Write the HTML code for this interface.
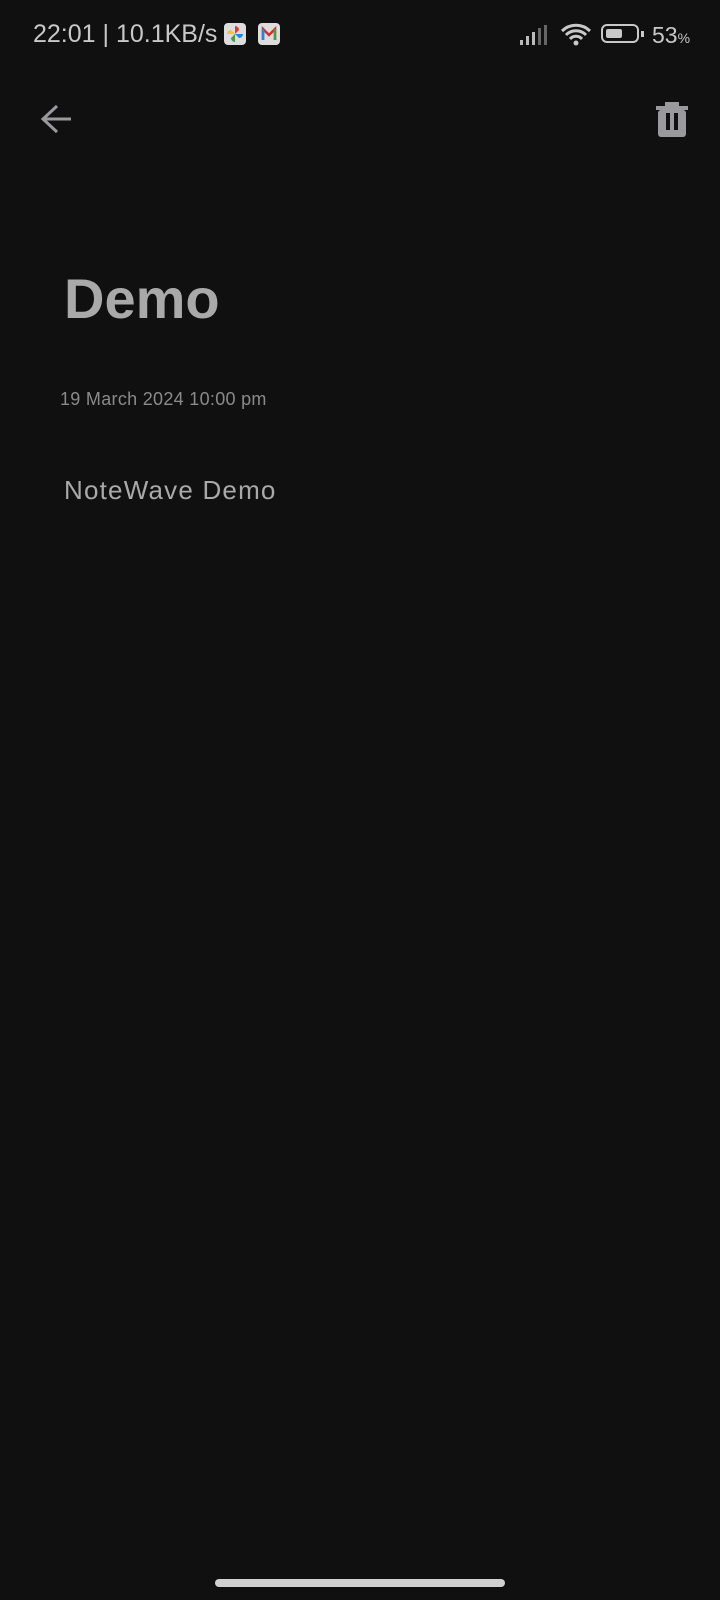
<!DOCTYPE html>
<html><head><style>
html,body{margin:0;padding:0;background:#101010;width:720px;height:1600px;overflow:hidden;font-family:"Liberation Sans",sans-serif}
.a{position:absolute;white-space:nowrap}
</style></head><body>
<div class="a" style="left:33px;top:20px;font-size:25px;color:#c8c8c8;letter-spacing:0px">22:01 | 10.1KB/s</div>
<div class="a" style="left:224px;top:23px;width:22px;height:22px;background:#ddd;border-radius:4px;overflow:hidden">
 <svg width="22" height="22" viewBox="0 0 22 22"><path d="M11 11V3a4 4 0 0 1 4 4z" fill="#e53935"/><path d="M11 11h8a4 4 0 0 1-4 4z" fill="#1e88e5"/><path d="M11 11v8a4 4 0 0 1-4-4z" fill="#43a047"/><path d="M11 11H3a4 4 0 0 1 4-4z" fill="#fbc02d"/></svg></div>
<div class="a" style="left:258px;top:23px;width:22px;height:22px;background:#ddd;border-radius:4px">
 <svg width="22" height="22" viewBox="0 0 22 22"><path d="M5 17V6l6 6 6-6v11" fill="none" stroke="#d32f2f" stroke-width="2.5"/><path d="M5 17V6" stroke="#1e88e5" stroke-width="2.5"/><path d="M17 17V6" stroke="#43a047" stroke-width="2.5"/></svg></div>
<svg class="a" style="left:518px;top:24px" width="34" height="22"><rect x="2" y="16" width="3" height="5" fill="#bbb"/><rect x="8" y="12" width="3" height="9" fill="#bbb"/><rect x="14" y="8" width="3" height="13" fill="#bbb"/><rect x="20" y="4" width="3" height="17" fill="#666"/><rect x="26" y="1" width="3" height="20" fill="#666"/></svg>
<svg class="a" style="left:560px;top:22px" width="32" height="26" viewBox="0 0 32 26"><path d="M2 9a20 20 0 0 1 28 0M6 13a14 14 0 0 1 20 0M10 17a8 8 0 0 1 12 0" fill="none" stroke="#c8c8c8" stroke-width="3"/><circle cx="16" cy="21" r="2.5" fill="#c8c8c8"/></svg>
<div class="a" style="left:601px;top:24px;width:38px;height:19px;border:2.5px solid #c8c8c8;border-radius:6px;box-sizing:border-box"><div style="position:absolute;left:3px;top:3px;width:16px;height:9px;background:#c8c8c8;border-radius:2px"></div></div>
<div class="a" style="left:641px;top:31px;width:3px;height:6px;background:#c8c8c8"></div>
<div class="a" style="left:652px;top:22px;font-size:23px;color:#c8c8c8">53<span style="font-size:14px">%</span></div>
<svg class="a" style="left:38px;top:102px" width="36" height="36" viewBox="0 0 36 36"><path d="M33 17H7M19 4L5 17l14 13" fill="none" stroke="#9a9a9e" stroke-width="3"/></svg>
<svg class="a" style="left:655px;top:100px" width="34" height="38" viewBox="0 0 34 38"><rect x="1" y="6" width="32" height="4" fill="#9a9a9e"/><rect x="10" y="2" width="14" height="5" fill="#9a9a9e"/><rect x="3" y="10" width="28" height="27" rx="3" fill="#9a9a9e"/><rect x="11" y="13" width="4" height="17" fill="#101010"/><rect x="19" y="13" width="4" height="17" fill="#101010"/></svg>
<div class="a" style="left:64px;top:266px;font-size:56px;font-weight:bold;color:#a9a9a9">Demo</div>
<div class="a" style="left:60px;top:389px;font-size:18px;color:#8a8a8a;letter-spacing:0.3px">19 March 2024 10:00 pm</div>
<div class="a" style="left:64px;top:475px;font-size:26px;color:#a9a9a9;letter-spacing:1.2px">NoteWave Demo</div>
<div class="a" style="left:215px;top:1579px;width:290px;height:8px;border-radius:4px;background:#d0d0d0"></div>
</body></html>
